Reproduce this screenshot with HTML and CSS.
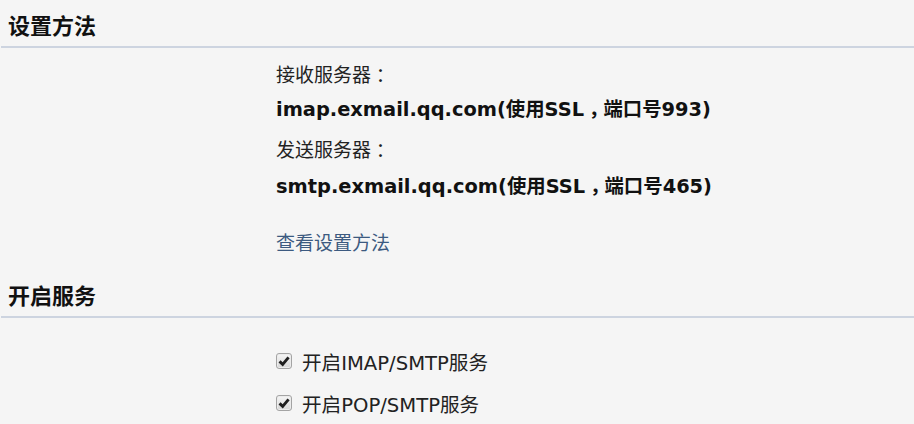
FILE: index.html
```html
<!DOCTYPE html>
<html lang="zh-CN">
<head>
  <meta charset="UTF-8">
  <title>设置方法</title>
  <link rel="stylesheet" href="styles.css">
</head>
<body>
  <div class="section-title">设置方法</div>
  <div class="section-body setup">
    <div class="label first">接收服务器<span class="punct">：</span></div>
    <div class="server">imap.exmail.qq.com(使用SSL<span class="punct">，</span>端口号993)</div>
    <div class="label second">发送服务器<span class="punct">：</span></div>
    <div class="server last">smtp.exmail.qq.com(使用SSL<span class="punct">，</span>端口号465)</div>
    <a class="help-link" href="#">查看设置方法</a>
  </div>

  <div class="section-title">开启服务</div>
  <div class="section-body services">
    <label class="option">
      <span class="check">
        <svg width="12" height="12" viewBox="0 0 10 10"><path d="M1.3 5.3 L3.9 7.8 L8.8 2.0" fill="none" stroke="#1e1e1e" stroke-width="2.4"/></svg>
      </span>
      开启IMAP/SMTP服务
    </label>
    <label class="option">
      <span class="check">
        <svg width="12" height="12" viewBox="0 0 10 10"><path d="M1.3 5.3 L3.9 7.8 L8.8 2.0" fill="none" stroke="#1e1e1e" stroke-width="2.4"/></svg>
      </span>
      开启POP/SMTP服务
    </label>
  </div>
</body>
</html>
```

FILE: styles.css
```css
body {
  margin: 0;
  background-color: #f5f5f5;
  font-family: "DejaVu Sans", Verdana, "Noto Sans CJK SC", sans-serif;
  color: #111;
}

.section-title {
  margin-left: 1px;
  padding: 16px 0 8px 7px;
  height: 22px;
  line-height: 22px;
  font-size: 22px;
  font-weight: bold;
  border-bottom: 2px solid #cdd4e0;
}

.section-body {
  padding-left: 276px;
}

.punct {
  font-family: "Noto Sans CJK SC", sans-serif;
  font-feature-settings: "halt";
  padding: 0 0.25em;
}

.setup {
  padding-top: 12px;
  padding-bottom: 14px;
}

.label {
  font-size: 19px;
  color: #222;
}

.label.first {
  height: 28px;
  line-height: 28px;
}

.label.second {
  height: 42px;
  line-height: 42px;
}

.server {
  height: 40px;
  line-height: 40px;
  font-size: 19.4px;
  font-weight: bold;
}

.server.last {
  height: 30px;
  line-height: 30px;
}

.help-link {
  display: block;
  margin-top: 30px;
  height: 26px;
  line-height: 26px;
  font-size: 19px;
  color: #3c5a80;
  text-decoration: none;
}

.services {
  padding-top: 30px;
}

.option {
  display: flex;
  align-items: center;
  height: 26px;
  margin-bottom: 16px;
  font-size: 19.6px;
  color: #222;
}

.check {
  display: flex;
  align-items: center;
  justify-content: center;
  width: 14px;
  height: 14px;
  margin: 0 10px 0 0;
  border: 1px solid #a4a4a4;
  border-radius: 3px;
  background: linear-gradient(#f6f6f6, #d6d6d6);
  box-shadow: inset 0 0 0 1px #ececec;
}
```
